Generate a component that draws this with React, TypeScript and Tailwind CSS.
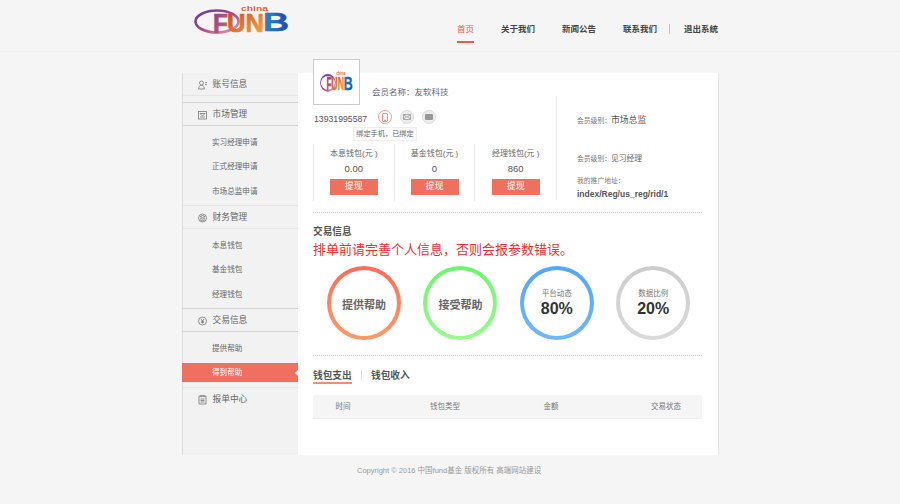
import React from "react";

function Logo({ className, id }: { className: string; id: string }) {
  return (
    <svg viewBox="0 0 96 32" preserveAspectRatio="none" className={`overflow-visible ${className}`}>
      <defs>
        <linearGradient id={`${id}r`} x1="0" y1="0" x2="1" y2="1">
          <stop offset="0" stopColor="#5f3ea8" />
          <stop offset="0.5" stopColor="#b0437f" />
          <stop offset="1" stopColor="#e8a0b0" />
        </linearGradient>
        <linearGradient id={`${id}f`} x1="0" y1="0" x2="1" y2="1">
          <stop offset="0" stopColor="#7d3a98" />
          <stop offset="1" stopColor="#d8705a" />
        </linearGradient>
        <linearGradient id={`${id}n`} x1="0" y1="0" x2="1" y2="1">
          <stop offset="0" stopColor="#c8401e" />
          <stop offset="1" stopColor="#f5b040" />
        </linearGradient>
        <linearGradient id={`${id}b`} x1="0" y1="0" x2="1" y2="0">
          <stop offset="0" stopColor="#e8402a" />
          <stop offset="0.2" stopColor="#1a80d8" />
          <stop offset="1" stopColor="#2048a8" />
        </linearGradient>
      </defs>
      <ellipse cx="23" cy="16.5" rx="21.5" ry="11" fill="none" stroke={`url(#${id}r)`} strokeWidth="2.6" />
      <text x="47" y="6" fontSize="6.5" fontWeight="700" fill="#e8603c" fontFamily="Liberation Sans" textLength="27" lengthAdjust="spacingAndGlyphs">china</text>
      <text x="19" y="28" fontSize="28" fontWeight="700" fill={`url(#${id}f)`} stroke={`url(#${id}f)`} strokeWidth="0.7" fontFamily="Liberation Sans" textLength="15" lengthAdjust="spacingAndGlyphs">F</text>
      <text x="33" y="27" fontSize="26" fontWeight="700" fill={`url(#${id}n)`} stroke={`url(#${id}n)`} strokeWidth="0.7" fontFamily="Liberation Sans" textLength="37" lengthAdjust="spacingAndGlyphs">UN</text>
      <text x="69" y="26" fontSize="26" fontWeight="700" fill={`url(#${id}b)`} stroke={`url(#${id}b)`} strokeWidth="0.5" fontFamily="Liberation Sans" textLength="26" lengthAdjust="spacingAndGlyphs">B</text>
    </svg>
  );
}

function Ico({ children }: { children: React.ReactNode }) {
  return (
    <svg width="9" height="10" viewBox="0 0 9 10" fill="none" stroke="currentColor" strokeWidth="0.8">
      {children}
    </svg>
  );
}

function Head({ icon, label, line }: { icon: React.ReactNode; label: string; line: string }) {
  return (
    <div className={`flex h-[23px] items-center gap-[5.5px] border-b pl-[15px] pt-[2px] text-[8.7px] text-[#666] ${line}`}>
      <span className="flex w-[9px] justify-center text-[#777]">{icon}</span>
      <span>{label}</span>
    </div>
  );
}

function Sub({ label }: { label: string }) {
  return <div className="flex h-[24.5px] items-center pl-[29px] text-[7.6px] text-[#666]">{label}</div>;
}

function Wallet({ title, value, last }: { title: string; value: string; last?: boolean }) {
  return (
    <div className={`flex flex-col items-center border-l border-[#e8e8e8] pt-[4px] ${last ? "w-[82px]" : "w-[81px]"}`}>
      <div className="text-[8px] leading-[12px] text-[#666]">{title}</div>
      <div className="mt-[3px] text-[9.5px] leading-[12px] text-[#555]">{value}</div>
      <div className="mt-[4px] flex h-[16px] w-[48px] items-center justify-center bg-[#f07060] text-[9px] text-white">提现</div>
    </div>
  );
}

function Ring({ ring, children }: { ring: string; children: React.ReactNode }) {
  return (
    <div className={`h-[74px] w-[74px] rounded-full p-[4px] ${ring}`}>
      <div className="flex h-full w-full flex-col items-center justify-center rounded-full bg-white">{children}</div>
    </div>
  );
}

export default function App() {
  return (
    <div className="flex h-[504px] w-[900px] flex-col overflow-hidden bg-[#f5f5f5] font-['Liberation_Sans','Noto_Sans_CJK_SC',sans-serif]">
      <header className="flex h-[52px] shrink-0 border-b border-[#eeeeee] pl-[194px]">
        <Logo id="a" className="mt-[5px] h-[32px] w-[96px]" />
        <nav className="ml-[167px] flex text-[8.5px] font-bold text-[#444]">
          <div className="flex h-[43px] w-[17px] items-center justify-center whitespace-nowrap border-b-2 border-[#ee5a44] pt-[17px] font-normal text-[#ee5a44]">首页</div>
          <div className="ml-[27px] mt-[20px] h-[18px] whitespace-nowrap leading-[18px]">关于我们</div>
          <div className="ml-[27px] mt-[20px] h-[18px] whitespace-nowrap leading-[18px]">新闻公告</div>
          <div className="ml-[27px] mt-[20px] h-[18px] whitespace-nowrap leading-[18px]">联系我们</div>
          <div className="ml-[12px] mt-[24px] h-[10px] border-l border-[#f0b0a0]" />
          <div className="ml-[14px] mt-[20px] h-[18px] whitespace-nowrap leading-[18px]">退出系统</div>
        </nav>
      </header>

      <main className="ml-[182px] mt-[21px] flex h-[382px] w-[537px] shrink-0 border-r border-[#e4e4e4]">
        <aside className="w-[116px] shrink-0 border-l border-[#dcdcdc] bg-[#f2f2f2]">
          <Head
            line="border-[#e6e6e6]"
            label="账号信息"
            icon={
              <Ico>
                <circle cx="3.5" cy="3" r="2" />
                <path d="M.6 9c0-2.4 1.3-3.6 2.9-3.6S6.400 6.600 6.400 9zM7 2.500h2M7 4.500h2" />
              </Ico>
            }
          />
          <div className="h-[7px] border-b border-[#d4d4d4]" />
          <Head
            line="border-[#d4d4d4]"
            label="市场管理"
            icon={
              <Ico>
                <rect x=".5" y="1.500" width="8" height="7.500" />
                <path d="M2 3.500h5M2 3.500l2.500 2.500L7 3.500M2 7h5" />
              </Ico>
            }
          />
          <div className="flex flex-col border-b border-[#e6e6e6] pb-[1.5px] pt-[4px]">
            <Sub label="实习经理申请" />
            <Sub label="正式经理申请" />
            <Sub label="市场总监申请" />
          </div>
          <Head
            line="border-[#e6e6e6]"
            label="财务管理"
            icon={
              <Ico>
                <circle cx="4.500" cy="5" r="4" />
                <path d="M2 3.500l2.500-1 2.500 1-2.500 1zM2 5.200l2.500 1 2.500-1M2 6.800l2.500 1 2.500-1" />
              </Ico>
            }
          />
          <div className="flex flex-col border-b border-[#d4d4d4] pb-[1.5px] pt-[4px]">
            <Sub label="本息钱包" />
            <Sub label="基金钱包" />
            <Sub label="经理钱包" />
          </div>
          <Head
            line="border-[#d4d4d4]"
            label="交易信息"
            icon={
              <Ico>
                <circle cx="4.500" cy="5" r="4" />
                <path d="M3 2.800 4.500 5 6 2.800M4.500 5v2.600M3 5.200h3M3 6.400h3" />
              </Ico>
            }
          />
          <div className="flex flex-col border-b border-[#e6e6e6] pb-[5px] pt-[4px]">
            <Sub label="提供帮助" />
            <div className="relative -ml-px mt-[2.5px] flex h-[19px] items-center bg-[#f07060] pl-[30px] text-[7.6px] text-white">
              得到帮助
              <span className="absolute right-0 top-[6.500px] h-0 w-0 border-y-[3px] border-r-[3px] border-y-transparent border-r-white" />
            </div>
          </div>
          <Head
            line="border-transparent"
            label="报单中心"
            icon={
              <Ico>
                <path d="M2.500 1H1v8h7V1H6.500M2.500.600h4v1h-4zM2.500 4h4M2.500 5.500h4M2.500 7h4" />
              </Ico>
            }
          />
        </aside>

        <section className="flex-1 bg-white pl-[15px] pr-[16px]">
          <div className="flex h-[140px] border-b border-dotted border-[#c8c8c8]">
            <div className="w-[243px]">
              <div className="flex">
                <div className="-mt-[14px] flex h-[46px] w-[47px] items-center justify-center border border-[#cccccc] bg-white">
                  <Logo id="b" className="h-[23px] w-[33px]" />
                </div>
                <div className="ml-[12px] mt-[13px] text-[8.5px] leading-[12px] text-[#666]">会员名称：友软科技</div>
              </div>
              <div className="relative mt-[1px] flex h-[24px] items-center">
                <span className="mt-[3px] w-[65px] pl-px text-[8.7px] text-[#555]">13931995587</span>
                <div className="mb-[2px] flex gap-[8px]">
                  <span className="flex h-[14px] w-[14px] items-center justify-center rounded-full border border-[#f5a090]">
                    <svg width="6" height="9" viewBox="0 0 6 9" fill="none" stroke="#f07060" strokeWidth="0.8">
                      <rect x=".5" y=".5" width="5" height="8" rx=".6" />
                      <path d="M2 7.300h2" />
                    </svg>
                  </span>
                  <span className="flex h-[14px] w-[14px] items-center justify-center rounded-full border border-[#dddddd] bg-[#ececec]">
                    <svg width="8" height="6" viewBox="0 0 8 6" fill="none" stroke="#999" strokeWidth="0.8">
                      <path d="M.5.500h7v5h-7zM.5.500l3.500 2.800L7.500.500M.5 5.500 3 2.600M7.500 5.500 5 2.600" />
                    </svg>
                  </span>
                  <span className="flex h-[14px] w-[14px] items-center justify-center rounded-full border border-[#dddddd] bg-[#ececec]">
                    <span className="h-[6px] w-[8px] rounded-[1px] bg-[#999]" />
                  </span>
                </div>
                <div className="absolute left-[40px] top-[21px] z-10 flex h-[14px] w-[64px] items-center justify-center whitespace-nowrap border border-[#eeeeee] bg-white text-[7.2px] text-[#666]">
                  绑定手机，已绑定
                </div>
              </div>
              <div className="mt-[14px] flex h-[57px]">
                <Wallet title="本息钱包(元 )" value="0.00" />
                <Wallet title="基金钱包(元 )" value="0" />
                <Wallet title="经理钱包(元 )" value="860" last />
              </div>
            </div>
            <div className="mt-[23px] h-[104px] border-l border-[#e8e8e8] pl-[20px]">
              <div className="mt-[17px] text-[6.8px] leading-[14px] text-[#777]">
                会员级别：<span className="text-[8.8px] text-[#555]">市场总监</span>
              </div>
              <div className="mt-[24px] text-[6.8px] leading-[14px] text-[#777]">
                会员级别：<span className="text-[7.8px] text-[#666]">见习经理</span>
              </div>
              <div className="mt-[9px] text-[6.8px] leading-[12px] text-[#777]">我的推广地址：</div>
              <div className="mt-[1px] text-[8.5px] font-bold leading-[12px] text-[#555]">index/Reg/us_reg/rid/1</div>
            </div>
          </div>

          <div className="mt-[12px] text-[9.7px] font-bold leading-[14px] text-[#555]">交易信息</div>
          <div className="mt-[2px] text-[13px] leading-[18px] text-[#f03030]">排单前请完善个人信息，否则会报参数错误。</div>
          <div className="ml-[14px] mt-[7px] flex gap-[22.4px]">
            <Ring ring="bg-gradient-to-b from-[#ff6a5c] to-[#ff9a66]">
              <span className="pt-[4px] text-[11px] font-bold text-[#666]">提供帮助</span>
            </Ring>
            <Ring ring="bg-gradient-to-b from-[#6cf56c] to-[#96fb8c]">
              <span className="pt-[4px] text-[11px] font-bold text-[#666]">接受帮助</span>
            </Ring>
            <Ring ring="bg-gradient-to-b from-[#52a6f8] to-[#70b8fb]">
              <span className="text-[7.5px] leading-[10px] text-[#777]">平台动态</span>
              <span className="mt-[1px] text-[16px] font-bold leading-[18px] text-[#333]">80%</span>
            </Ring>
            <Ring ring="bg-gradient-to-b from-[#cccccc] to-[#dadada]">
              <span className="text-[7.5px] leading-[10px] text-[#777]">数据比例</span>
              <span className="mt-[1px] text-[16px] font-bold leading-[18px] text-[#333]">20%</span>
            </Ring>
          </div>

          <div className="mt-[15px] border-t border-dotted border-[#c8c8c8]" />
          <div className="mt-[13px] flex items-start text-[9.7px] font-bold text-[#555]">
            <div className="h-[15px] w-[39px] whitespace-nowrap border-b-2 border-[#f58a78] leading-[13px]">钱包支出</div>
            <div className="ml-[9px] mt-[1px] h-[10px] border-l border-[#dddddd]" />
            <div className="ml-[9px] whitespace-nowrap leading-[13px]">钱包收入</div>
          </div>
          <div className="mt-[11px] flex h-[24px] items-center border-b border-[#f0f0f0] bg-[#f5f5f5] text-[7.5px] text-[#777]">
            <span className="w-[60px] text-center">时间</span>
            <span className="ml-[42px] w-[60px] text-center">钱包类型</span>
            <span className="ml-[46px] w-[60px] text-center">金额</span>
            <span className="ml-[55px] w-[60px] text-center">交易状态</span>
          </div>
        </section>
      </main>

      <footer className="ml-[357px] mt-[10px] text-[7.5px] leading-[12px] text-[#999]">Copyright © 2016 中国fund基金 版权所有 高端网站建设</footer>
    </div>
  );
}
